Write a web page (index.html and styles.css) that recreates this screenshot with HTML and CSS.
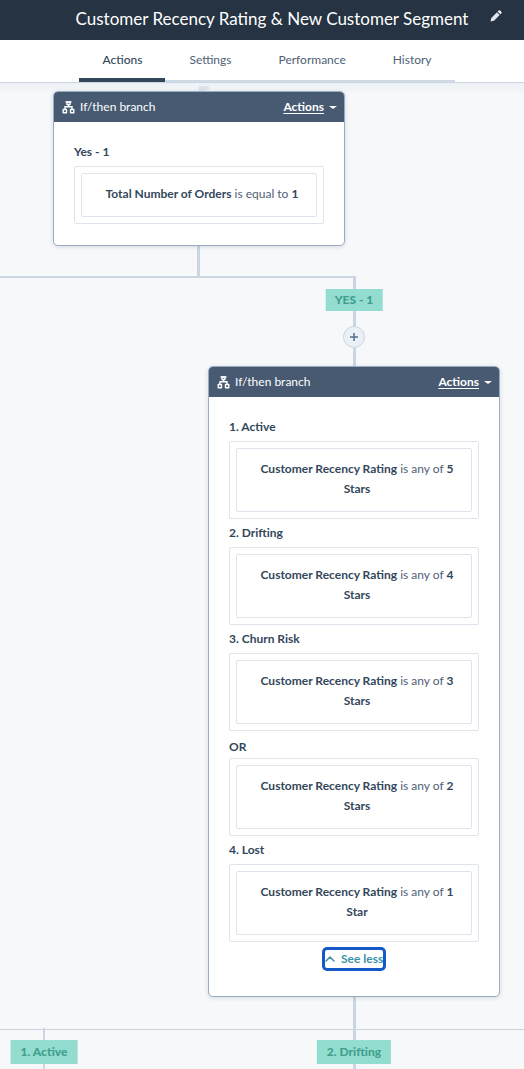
FILE: index.html
```html
<!DOCTYPE html>
<html lang="en">
<head>
    <meta charset="UTF-8">
    <meta name="viewport" content="width=device-width, initial-scale=1.0">
    <title>Customer Recency Rating &amp; New Customer Segment</title>
    <link rel="stylesheet" href="styles.css">
</head>
<body>
    <!-- Shared icon -->
    <svg class="sprite" aria-hidden="true">
        <symbol id="icon-branch" viewBox="0 0 13 13">
            <path d="M3.500 1h6M6.500 3.500v2M3 8V5.700h7V8" fill="none" stroke="currentColor" stroke-width="1.400"/>
            <path d="M5 1h3v2.500H5zM1.200 8.500h3.300v3.300H1.200zM8.500 8.500h3.300v3.300H8.500z" fill="none" stroke="currentColor" stroke-width="1.400" stroke-linejoin="round"/>
        </symbol>
    </svg>

    <header class="top-bar">
        <h1 class="title">Customer Recency Rating &amp; New Customer Segment</h1>
        <button class="edit-button" type="button" aria-label="Edit name">
            <svg width="12" height="12" viewBox="0 0 12 12" aria-hidden="true">
                <path d="M.5 11.500l.8-3.500L7 2.300 9.700 5 4 10.700z" fill="#dfe5ec"/>
                <path d="M7.700 1.600L8.800.6q.6-.5 1.200 0l1.400 1.400q.5.600 0 1.200L10.400 4.300z" fill="#fff"/>
            </svg>
        </button>
    </header>

    <nav class="nav">
        <div class="tabs">
            <a class="tab active" href="#actions">Actions</a>
            <a class="tab" href="#settings">Settings</a>
            <a class="tab" href="#performance">Performance</a>
            <a class="tab" href="#history">History</a>
        </div>
    </nav>

    <main class="canvas">
        <!-- Connector lines -->
        <svg class="lines" aria-hidden="true">
            <path d="M199 3h8q3 1 2 3l-9 4-2 1z" fill="#dce3eb"/>
            <g fill="#cbd6e2">
                <rect x="197" y="163" width="3" height="32"/>
                <rect x="0" y="193" width="355" height="2"/>
                <rect x="353" y="193" width="3" height="91"/>
                <rect x="353" y="914" width="3" height="100%"/>
                <rect x="0" y="946" width="100%" height="1"/>
                <rect x="43" y="945" width="2" height="100%"/>
            </g>
        </svg>

        <section class="card card-orders">
            <div class="card-header">
                <svg class="card-icon" aria-hidden="true"><use href="#icon-branch"/></svg>
                <span class="card-name">If/then branch</span>
                <button class="card-actions" type="button"><span>Actions</span></button>
            </div>
            <div class="card-body">
                <h2 class="label">Yes - 1</h2>
                <div class="group">
                    <p class="filter"><b>Total Number of Orders</b> is equal to <b>1</b></p>
                </div>
            </div>
        </section>

        <span class="badge badge-yes">YES - 1</span>
        <button class="add-button" type="button" aria-label="Add action">
            <svg width="10" height="10" viewBox="0 0 10 10" aria-hidden="true">
                <path d="M5 1v8M1 5h8" stroke="#516f90" stroke-width="1.500"/>
            </svg>
        </button>

        <section class="card card-recency">
            <div class="card-header">
                <svg class="card-icon" aria-hidden="true"><use href="#icon-branch"/></svg>
                <span class="card-name">If/then branch</span>
                <button class="card-actions" type="button"><span>Actions</span></button>
            </div>
            <div class="card-body">
                <h2 class="label">1. Active</h2>
                <div class="group">
                    <p class="filter"><b>Customer Recency Rating</b> is any of <b>5</b> <b>Stars</b></p>
                </div>
                <h2 class="label">2. Drifting</h2>
                <div class="group">
                    <p class="filter"><b>Customer Recency Rating</b> is any of <b>4</b> <b>Stars</b></p>
                </div>
                <h2 class="label">3. Churn Risk</h2>
                <div class="group">
                    <p class="filter"><b>Customer Recency Rating</b> is any of <b>3</b> <b>Stars</b></p>
                </div>
                <p class="label or">OR</p>
                <div class="group">
                    <p class="filter"><b>Customer Recency Rating</b> is any of <b>2</b> <b>Stars</b></p>
                </div>
                <h2 class="label">4. Lost</h2>
                <div class="group">
                    <p class="filter"><b>Customer Recency Rating</b> is any of <b>1</b> <b>Star</b></p>
                </div>
                <button class="see-less" type="button">
                    <svg width="10" height="6" viewBox="0 0 10 6" aria-hidden="true">
                        <path d="M1 5l4-4 4 4" fill="none" stroke="#3a93ab" stroke-width="1.500" stroke-linecap="round" stroke-linejoin="round"/>
                    </svg>
                    See less
                </button>
            </div>
        </section>

        <span class="badge badge-active">1. Active</span>
        <span class="badge badge-drifting">2. Drifting</span>
    </main>
</body>
</html>
```

FILE: styles.css
```css
* {
    box-sizing: border-box;
}
body {
    margin: 0;
    min-height: 100vh;
    display: flex;
    flex-direction: column;
    font-family: Lato, "Open Sans", sans-serif;
    font-size: 12px;
    line-height: 20px;
    color: #33475b;
    background: #f6f8fa;
}
button {
    font: inherit;
    color: inherit;
    background: none;
    border: none;
    padding: 0;
    cursor: pointer;
}
.sprite {
    position: absolute;
    width: 0;
    height: 0;
}

/* Header */
.top-bar {
    display: flex;
    align-items: center;
    justify-content: center;
    gap: 22px;
    height: 40px;
    padding: 0 0 2px 54px;
    background: #253342;
}
.title {
    margin: 0;
    font-size: 17px;
    font-weight: 400;
    line-height: 24px;
    color: #fff;
    white-space: nowrap;
}
.edit-button {
    display: flex;
    margin-bottom: 6px;
}

/* Tabs */
.nav {
    display: flex;
    justify-content: center;
    padding-left: 10px;
    background: #fff;
    border-bottom: 1px solid #cbd6e2;
}
.tabs {
    display: flex;
    gap: 1px;
    height: 42px;
    border-bottom: 2px solid #cfdae5;
}
.tab {
    height: 42px;
    padding: 10px 23px;
    color: #506176;
    text-decoration: none;
}
.tab.active {
    color: #33475b;
    font-weight: 500;
    border-bottom: 4px solid #33475b;
}

/* Canvas */
.canvas {
    position: relative;
    flex: 1;
    min-height: 986px;
    overflow: hidden;
    background: linear-gradient(#edf1f5, #f6f8fa 12px);
}
.lines {
    position: absolute;
    top: 0;
    left: 0;
    width: 100%;
    height: 100%;
}

/* Branch cards */
.card {
    position: absolute;
    width: 292px;
    background: #fff;
    border: 1px solid #99acc2;
    border-radius: 5px;
    box-shadow: 0 1px 4px rgba(45, 62, 80, 0.16);
    overflow: hidden;
}
.card-orders {
    left: 53px;
    top: 8px;
}
.card-recency {
    left: 208px;
    top: 283px;
}
.card-header {
    display: flex;
    align-items: center;
    gap: 5px;
    height: 30px;
    padding: 0 7px 0 8px;
    color: #fff;
    background: #475a72;
}
.card-icon {
    width: 13px;
    height: 13px;
}
.card-name {
    flex: 1;
}
.card-actions {
    display: flex;
    align-items: center;
    gap: 5px;
    font-weight: 700;
}
.card-actions span {
    text-decoration: underline;
    text-underline-offset: 2px;
}
.card-actions::after {
    content: "";
    border: 4px solid transparent;
    border-top: 3px solid #fff;
    border-bottom: 0;
}
.card-body {
    padding: 16px 20px 21px;
}
.label {
    margin: 4px 0;
    font-size: 12px;
    font-weight: 700;
    line-height: 20px;
}
.label.or {
    margin: 6px 0 1px;
}
.group {
    padding: 6px;
    border: 1px solid #dfe3eb;
    border-radius: 2px;
}
.filter {
    margin: 0;
    padding: 10px 12px 12px 18px;
    border: 1px solid #dfe3eb;
    border-radius: 2px;
    text-align: center;
    color: #506176;
}
.filter b {
    color: #33475b;
}
.see-less {
    display: flex;
    align-items: center;
    gap: 6px;
    width: 64px;
    height: 24px;
    margin: 5px auto 4px;
    border: 3px solid #1558c7;
    border-radius: 5px;
    font-weight: 700;
    color: #3a93ab;
    white-space: nowrap;
}
.see-less svg {
    flex: none;
}

/* Branch badges */
.badge {
    position: absolute;
    padding: 2px 10px;
    font-weight: 900;
    color: #3fa08c;
    background: #93dcd0;
    transform: translateX(-50%);
}
.badge-yes {
    left: 354px;
    top: 206px;
    padding: 1px 9px;
}
.badge-active {
    left: 44px;
    top: 957px;
}
.badge-drifting {
    left: 354px;
    top: 957px;
}
.add-button {
    position: absolute;
    left: 343px;
    top: 243px;
    display: flex;
    align-items: center;
    justify-content: center;
    width: 22px;
    height: 22px;
    background: #eaf0f6;
    border: 1px solid #cbd6e2;
    border-radius: 50%;
}
```
